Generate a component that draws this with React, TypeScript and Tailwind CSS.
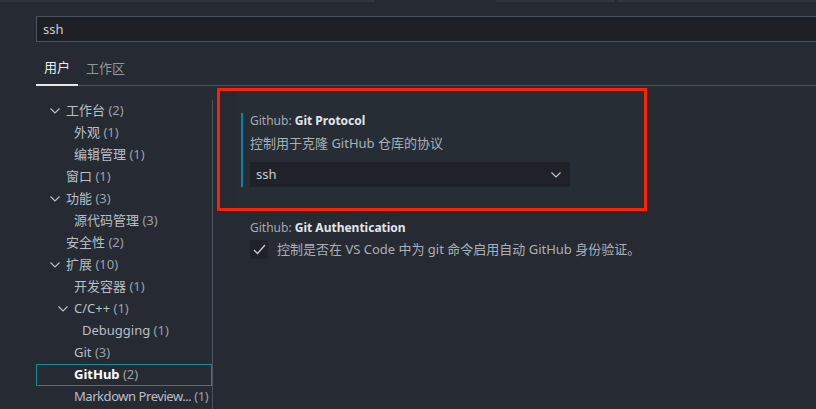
import React from 'react';

const font = { fontFamily: '"Noto Sans", "Noto Sans CJK SC", sans-serif' };

type Node = { label: string; count: number; depth: number; open?: boolean; selected?: boolean; tight?: boolean };

const tree: Node[] = [
    { label: '工作台', count: 2, depth: 1, open: true },
    { label: '外观', count: 1, depth: 2 },
    { label: '编辑管理', count: 1, depth: 2 },
    { label: '窗口', count: 1, depth: 1 },
    { label: '功能', count: 3, depth: 1, open: true },
    { label: '源代码管理', count: 3, depth: 2 },
    { label: '安全性', count: 2, depth: 1 },
    { label: '扩展', count: 10, depth: 1, open: true },
    { label: '开发容器', count: 1, depth: 2 },
    { label: 'C/C++', count: 1, depth: 2, open: true },
    { label: 'Debugging', count: 1, depth: 3 },
    { label: 'Git', count: 3, depth: 2 },
    { label: 'GitHub', count: 2, depth: 2, selected: true },
    { label: 'Markdown Preview...', count: 1, depth: 2, tight: true },
];

function Chevron({ className }: { className?: string }) {
    return (
        <svg width="10" height="6" viewBox="0 0 10 6" className={className}>
            <polyline points="0.5,0.5 5,5 9.5,0.5" fill="none" stroke="currentColor" strokeWidth="1.2" />
        </svg>
    );
}

function TreeRow({ node }: { node: Node }) {
    const pad = { 1: 'pl-[29px]', 2: 'pl-[37px]', 3: 'pl-[45px]' }[node.depth];
    return (
        <div
            className={`relative flex items-center h-[22px] text-[13px] whitespace-nowrap ${pad} ${
                node.selected ? 'border border-[#1b8a90]' : 'border border-transparent'
            } ${node.tight ? 'tracking-[-0.45px]' : ''}`}
        >
            {node.open && (
                <Chevron
                    className={`absolute top-[7px] text-[#b9bfc6] ${node.depth === 1 ? 'left-[13px]' : 'left-[21px]'}`}
                />
            )}
            <span className={node.selected ? 'font-bold text-white' : 'text-[#b9bfc6]'}>{node.label}</span>
            <span className="text-[#9aa1a9] whitespace-pre"> ({node.count})</span>
        </div>
    );
}

export default function App() {
    return (
        <div className="w-[816px] h-[409px] overflow-hidden bg-[#262b33]" style={font}>
            <div className="flex h-[2px]">
                <div className="w-[375px] bg-[#2f3540]" />
                <div className="w-[121px]" />
                <div className="w-[119px] bg-[#2f3540]" />
                <div className="w-[2px]" />
                <div className="flex-1 bg-[#2f3540]" />
            </div>

            <div className="ml-[36px] mt-[14px] h-[26px] border border-r-0 border-[#4a5360] bg-[#1c1f23] flex items-center px-[6px] pt-[1px] text-[13px] text-[#c8cdd2]">
                ssh
            </div>

            <div className="ml-[36px] h-[44px] border-b border-[#4a5360] flex">
                <div className="w-[42px] h-[44px] flex items-center justify-center pt-[9px] border-b-2 border-[#e8e8e8] text-[13px] text-[#e8eaec]">
                    用户
                </div>
                <div className="h-[44px] flex items-center pl-[8px] pt-[9px] text-[13px] text-[#8f969e]">工作区</div>
            </div>

            <div className="flex">
                <div className="ml-[36px] w-[177px] mt-[14px] border-r border-[#4a5360] h-[320px]">
                    {tree.map((n) => (
                        <TreeRow key={n.label} node={n} />
                    ))}
                </div>

                <div className="flex-1 pl-[4px] pt-[2px]">
                    <div className="w-[430px] h-[123px] border-[3px] border-[#ff2200]">
                        <div className="ml-[16px] h-full bg-[#272d35] pl-[5px] pt-[22px]">
                            <div className="border-l-2 border-[#0e7fa6] pl-[7px]">
                                <div className="h-[16px] leading-[16px] text-[12px] text-[#a3aab1]">
                                    Github: <span className="font-bold text-[#e2e6ea]">Git Protocol</span>
                                </div>
                                <div className="mt-[5px] leading-[18px] text-[13px] text-[#aab0b7]">
                                    控制用于克隆 GitHub 仓库的协议
                                </div>
                                <div className="mt-[10px] w-[320px] h-[25px] bg-[#1f2329] flex items-center justify-between pl-[6px] pr-[9px] text-[13px] text-[#c8cdd2]">
                                    <span>ssh</span>
                                    <Chevron className="text-[#b8c6d6]" />
                                </div>
                            </div>
                        </div>
                    </div>

                    <div className="ml-[33px] mt-[9px]">
                        <div className="h-[16px] leading-[16px] text-[12px] text-[#a3aab1]">
                            Github: <span className="font-bold text-[#e2e6ea]">Git Authentication</span>
                        </div>
                        <div className="mt-[4px] flex items-center">
                            <div className="w-[18px] h-[19px] rounded-[3px] bg-[#1f2329] flex items-center justify-center">
                                <svg width="13" height="11" viewBox="0 0 13 11">
                                    <polyline points="1,6 4.5,9.5 12,1" fill="none" stroke="#c5cbd2" strokeWidth="1.3" />
                                </svg>
                            </div>
                            <span className="ml-[9px] text-[13px] text-[#aab0b7]">
                                控制是否在 VS Code 中为 git 命令启用自动 GitHub 身份验证。
                            </span>
                        </div>
                    </div>
                </div>
            </div>
        </div>
    );
}
